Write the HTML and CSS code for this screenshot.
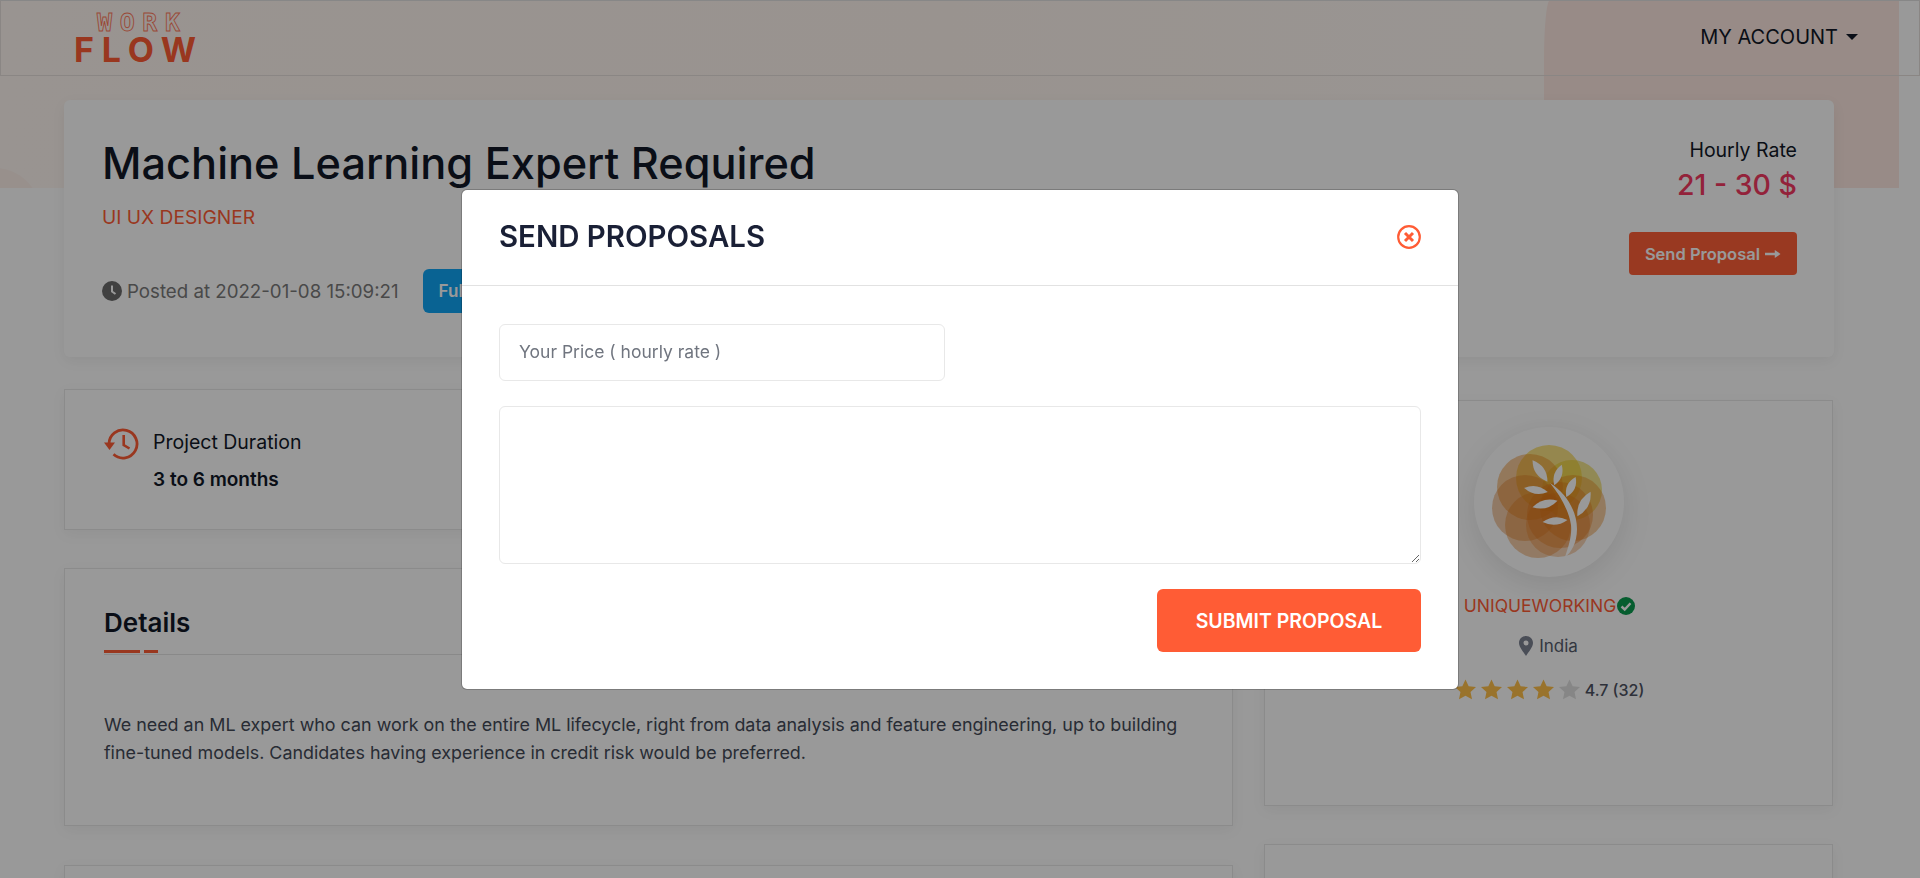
FILE: index.html
```html
<!DOCTYPE html>
<html lang="en">
<head>
    <meta charset="UTF-8">
    <title>Machine Learning Expert Required</title>
    <link rel="stylesheet" href="styles.css">
</head>
<body>

<div class="banner">
    <div class="banner-shape"></div>
    <div class="banner-dot"></div>
</div>

<header class="topbar">
    <a class="logo" href="#">
        <svg viewBox="0 0 124 54">
            <text class="logo-work" x="22" y="20" textLength="83">WORK</text>
            <text class="logo-flow" x="-1" y="51" textLength="122">FLOW</text>
        </svg>
    </a>
    <a class="account" href="#">MY ACCOUNT <span class="caret"></span></a>
</header>

<main class="page">
    <!-- job title -->
    <section class="job-card">
        <div>
            <h1>Machine Learning Expert Required</h1>
            <p class="job-role">UI UX DESIGNER</p>
            <div class="job-meta">
                <span class="posted">
                    <svg class="icon-clock" viewBox="0 0 20 20"><circle cx="10" cy="10" r="10" fill="#6b6b6b"/><path d="M10 4.500V10.500L13.500 13" fill="none" stroke="#fff" stroke-width="2"/></svg>
                    Posted at 2022-01-08 15:09:21
                </span>
                <span class="badge">Full Time</span>
            </div>
        </div>
        <div class="job-rate">
            <p class="rate-label">Hourly Rate</p>
            <p class="rate-value">21 - 30 $</p>
            <a class="btn-send" href="#">Send Proposal
                <svg class="icon-arrow" viewBox="0 0 18 10"><path d="M0 3.600H11V0.600L17.500 5L11 9.400V6.400H0Z" fill="#fff"/></svg>
            </a>
        </div>
    </section>

    <div class="columns">
        <div class="col-left">
            <section class="card duration">
                <svg class="icon-history" viewBox="0 0 36 32">
                    <path d="M5 16A14 14 0 1 1 9.500 26.300" fill="none" stroke="#ff5c35" stroke-width="2.800"/>
                    <path d="M0 14.500H11L5.500 22Z" fill="#ff5c35"/>
                    <path d="M19.700 7V17L25.500 20.500" fill="none" stroke="#ff5c35" stroke-width="2.600"/>
                </svg>
                <div>
                    <p class="duration-label">Project Duration</p>
                    <p class="duration-value">3 to 6 months</p>
                </div>
            </section>

            <section class="card details">
                <h2>Details</h2>
                <div class="rule"><span></span><span class="short"></span></div>
                <p class="details-text">We need an ML expert who can work on the entire ML lifecycle, right from data analysis and feature engineering, up to building fine-tuned models. Candidates having experience in credit risk would be preferred.</p>
            </section>

            <section class="card stub"></section>
        </div>

        <aside class="col-right">
            <section class="card company">
                <div class="avatar">
                    <svg viewBox="0 0 150 150">
                        <g>
                            <circle cx="75" cy="51" r="33" fill="#f2c81e" opacity=".55"/>
                            <circle cx="98" cy="63" r="30" fill="#e6c91e" opacity=".5"/>
                            <circle cx="56" cy="60" r="33" fill="#e8851a" opacity=".45"/>
                            <circle cx="99" cy="81" r="33" fill="#e8851a" opacity=".42"/>
                            <circle cx="51" cy="81" r="33" fill="#d9741c" opacity=".38"/>
                            <circle cx="86" cy="88" r="33" fill="#e27316" opacity=".38"/>
                            <circle cx="64" cy="98" r="33" fill="#e07a18" opacity=".38"/>
                            <circle cx="84" cy="98" r="32" fill="#e27316" opacity=".32"/>
                        </g>
                        <path d="M76 56C92 66 103 84 103 102C103 116 97 126 91 130C95 118 98 108 97 98C95 84 86 68 76 56Z" fill="#fff"/>
                        <g fill="#fff">
                            <path d="M-13 0Q0 -9 13 0Q0 9 -13 0Z" transform="translate(66 44) rotate(55)"/>
                            <path d="M-11 0Q0 -7.500 11 0Q0 7.500 -11 0Z" transform="translate(84 48) rotate(-70)"/>
                            <path d="M-11 0Q0 -8 11 0Q0 8 -11 0Z" transform="translate(97 60) rotate(-65)"/>
                            <path d="M-14 0Q0 -9 14 0Q0 9 -14 0Z" transform="translate(110 77) rotate(-62)"/>
                            <path d="M-12 0Q0 -7.500 12 0Q0 7.500 -12 0Z" transform="translate(62 63) rotate(10)"/>
                            <path d="M-13 0Q0 -8 13 0Q0 8 -13 0Z" transform="translate(71 77) rotate(-15)"/>
                            <path d="M-12.500 0Q0 -7.500 12.500 0Q0 7.500 -12.500 0Z" transform="translate(81 94) rotate(-5)"/>
                        </g>
                    </svg>
                </div>
                <p class="company-name">UNIQUEWORKING<svg class="icon-check" viewBox="0 0 18 18"><circle cx="9" cy="9" r="9" fill="#0a9b4f"/><path d="M4.500 9.500L7.700 12.500L13.500 6.300" fill="none" stroke="#fff" stroke-width="2.400"/></svg></p>
                <p class="company-loc">
                    <svg class="icon-pin" viewBox="0 0 14 20"><path fill-rule="evenodd" d="M7 0C3 0 0 3 0 7C0 11 4.500 16 7 20C9.500 16 14 11 14 7C14 3 11 0 7 0ZM7 4.500A2.500 2.500 0 1 1 7 9.500A2.500 2.500 0 0 1 7 4.500Z" fill="#7c8292"/></svg>
                    India
                </p>
                <div class="company-rating">
                    <svg class="star" viewBox="0 0 20 20"><path d="M10 0.500L13 6.900L20 7.700L14.800 12.400L16.200 19.400L10 15.900L3.800 19.400L5.200 12.400L0 7.700L7 6.900Z" fill="#ffc04a"/></svg>
                    <svg class="star" viewBox="0 0 20 20"><path d="M10 0.500L13 6.900L20 7.700L14.800 12.400L16.200 19.400L10 15.900L3.800 19.400L5.200 12.400L0 7.700L7 6.900Z" fill="#ffc04a"/></svg>
                    <svg class="star" viewBox="0 0 20 20"><path d="M10 0.500L13 6.900L20 7.700L14.800 12.400L16.200 19.400L10 15.900L3.800 19.400L5.200 12.400L0 7.700L7 6.900Z" fill="#ffc04a"/></svg>
                    <svg class="star" viewBox="0 0 20 20"><path d="M10 0.500L13 6.900L20 7.700L14.800 12.400L16.200 19.400L10 15.900L3.800 19.400L5.200 12.400L0 7.700L7 6.900Z" fill="#ffc04a"/></svg>
                    <svg class="star" viewBox="0 0 20 20"><path d="M10 0.500L13 6.900L20 7.700L14.800 12.400L16.200 19.400L10 15.900L3.800 19.400L5.200 12.400L0 7.700L7 6.900Z" fill="#e0e0e0"/></svg>
                    <span class="rating-text">4.7 (32)</span>
                </div>
            </section>
            <section class="card stub"></section>
        </aside>
    </div>
</main>

<!-- proposal modal, open -->
<div class="backdrop"></div>
<div class="modal-wrap">
    <div class="modal">
        <div class="modal-head">
            <h3>SEND PROPOSALS</h3>
            <svg class="icon-close" viewBox="0 0 24 24"><circle cx="12" cy="12" r="10.800" fill="none" stroke="#ff5c35" stroke-width="2.200"/><path d="M8 8L16 16M16 8L8 16" stroke="#ff5c35" stroke-width="3"/></svg>
        </div>
        <form class="modal-body">
            <input class="field field-price" type="text" placeholder="Your Price ( hourly rate )">
            <textarea class="field field-text"></textarea>
            <div class="modal-actions">
                <button class="btn-submit" type="button">SUBMIT PROPOSAL</button>
            </div>
        </form>
    </div>
</div>

</body>
</html>
```

FILE: styles.css
```css
* {
    box-sizing: border-box;
}
html, body {
    height: 100%;
    overflow: hidden;
}
body {
    margin: 0;
    font-family: "Inter", "Liberation Sans", sans-serif;
    color: #111827;
    background-color: #fff;
    position: relative;
}
p, h1, h2, h3 {
    margin: 0;
}
a {
    color: inherit;
    text-decoration: none;
}

/* banner behind the header */
.banner {
    position: absolute;
    top: 0;
    left: 0;
    width: 1899px;
    height: 188px;
    overflow: hidden;
    background: linear-gradient(90deg, #fff7f2 0%, #fff6ef 50%, #fff8f4 80%);
}
.banner-shape {
    position: absolute;
    top: 0;
    right: 0;
    width: 355px;
    height: 188px;
    background-color: #fde8e1;
    border-radius: 6px 0 0 0 / 60px 0 0 0;
}
.banner-dot {
    position: absolute;
    left: -50px;
    top: 168px;
    width: 90px;
    height: 90px;
    border-radius: 50%;
    background-color: #fdf0ea;
}

.topbar {
    position: relative;
    height: 76px;
    border: 1px solid #e6e0dc;
    border-top-color: #e2e2e2;
    display: flex;
    align-items: center;
    justify-content: space-between;
    padding: 0 61px 0 74px;
}
.logo {
    display: block;
    width: 124px;
    height: 54px;
    margin-top: -1px;
}
.logo svg {
    display: block;
    width: 124px;
    height: 54px;
    overflow: visible;
}
.logo-work {
    font-family: "DejaVu Sans Mono", monospace;
    font-size: 25px;
    font-weight: 700;
    fill: none;
    stroke: #ff7a5c;
    stroke-width: 0.9;
}
.logo-flow {
    font-family: "Inter", sans-serif;
    font-size: 34px;
    font-weight: 700;
    fill: #ff5c35;
}
.account {
    font-size: 20px;
    display: flex;
    align-items: center;
    gap: 8px;
    margin-top: -2px;
    color: #111827;
}
.caret {
    border-top: 6px solid #111827;
    border-left: 6px solid transparent;
    border-right: 6px solid transparent;
}

.page {
    position: relative;
    padding: 24px 86px 0 64px;
}

.job-card {
    height: 257px;
    background-color: #fff;
    border-radius: 6px;
    box-shadow: 0 4px 14px rgba(0, 0, 0, 0.06);
    padding: 37px 37px 0 38px;
    display: flex;
    justify-content: space-between;
}
h1 {
    font-size: 43.300px;
    font-weight: 500;
    line-height: 52px;
    color: #111827;
}
.job-role {
    margin-top: 16px;
    font-size: 19.200px;
    line-height: 24px;
    color: #ff5c35;
}
.job-meta {
    margin-top: 40px;
    display: flex;
    align-items: center;
    gap: 24px;
}
.posted {
    display: flex;
    align-items: center;
    gap: 5px;
    font-size: 18.700px;
    color: #7a7a7a;
}
.icon-clock {
    width: 20px;
    height: 20px;
}
.badge {
    height: 44px;
    line-height: 44px;
    padding: 0 16px;
    border-radius: 6px;
    background-color: #10a6f5;
    color: #fff;
    font-weight: 600;
    font-size: 17px;
}

.job-rate {
    text-align: right;
}
.rate-label {
    margin-top: 1px;
    font-size: 19.500px;
    line-height: 24px;
    color: #111827;
}
.rate-value {
    margin-top: 5px;
    font-size: 28.500px;
    line-height: 36px;
    font-weight: 500;
    color: #f53a62;
}
.btn-send {
    display: inline-flex;
    align-items: center;
    gap: 5px;
    margin-top: 29px;
    height: 43px;
    padding: 0 16px;
    background-color: #ff5f38;
    border-radius: 4px;
    color: #fff;
    font-size: 16.500px;
    font-weight: 600;
}
.icon-arrow {
    width: 16px;
    height: 10px;
}

.columns {
    display: flex;
    gap: 31px;
    margin-top: 32px;
    align-items: flex-start;
}
.col-left {
    width: 1169px;
    flex: none;
}
.col-right {
    width: 569px;
    flex: none;
    margin-top: 11px;
}
.card {
    background-color: #fff;
    border: 1px solid #e8e8e8;
    box-shadow: 0 4px 14px rgba(0, 0, 0, 0.05);
}
.stub {
    height: 120px;
}

.duration {
    height: 141px;
    margin-bottom: 38px;
    display: flex;
    align-items: flex-start;
    gap: 13px;
    padding: 38px 39px 0;
}
.icon-history {
    width: 36px;
    height: 32px;
}
.duration-label {
    font-size: 19.500px;
    line-height: 28px;
    color: #111827;
}
.duration-value {
    margin-top: 10px;
    font-size: 19px;
    line-height: 28px;
    font-weight: 600;
    color: #111827;
}

.details {
    height: 258px;
    margin-bottom: 39px;
    padding: 36px 39px 0;
}
h2 {
    font-size: 26px;
    line-height: 36px;
    font-weight: 600;
    color: #111827;
}
.rule {
    margin-top: 9px;
    height: 4px;
    border-bottom: 1px solid #e4e4e4;
    display: flex;
    gap: 4px;
    box-sizing: content-box;
}
.rule span {
    width: 36px;
    height: 3px;
    background-color: #ff5c35;
}
.rule .short {
    width: 14px;
}
.details-text {
    margin-top: 56px;
    font-size: 17.900px;
    line-height: 28px;
    color: #444a58;
}

.company {
    height: 406px;
    margin-bottom: 38px;
    padding-top: 26px;
    display: flex;
    flex-direction: column;
    align-items: center;
}
.avatar {
    width: 150px;
    height: 150px;
    border-radius: 50%;
    background-color: #fff;
    box-shadow: 0 8px 30px rgba(0, 0, 0, 0.1);
}
.avatar svg {
    display: block;
    width: 150px;
    height: 150px;
}
.company-name {
    margin-top: 17px;
    margin-left: 2px;
    display: flex;
    align-items: center;
    gap: 1px;
    font-size: 17.500px;
    line-height: 24px;
    color: #ff5c35;
}
.icon-check {
    width: 18px;
    height: 18px;
}
.company-loc {
    margin-top: 16px;
    display: flex;
    align-items: center;
    gap: 6px;
    font-size: 17px;
    line-height: 24px;
    color: #565c6c;
}
.icon-pin {
    width: 14px;
    height: 20px;
}
.company-rating {
    margin-top: 21px;
    margin-left: 2px;
    display: flex;
    align-items: center;
    gap: 5px;
}
.star {
    width: 21px;
    height: 21px;
}
.rating-text {
    font-size: 16px;
    font-weight: 500;
    color: #4d5262;
}

/* modal */
.backdrop {
    position: fixed;
    inset: 0;
    background-color: rgba(0, 0, 0, 0.4);
}
.modal-wrap {
    position: fixed;
    inset: 0;
    display: flex;
    justify-content: center;
    align-items: flex-start;
    padding-top: 189px;
}
.modal {
    width: 998px;
    height: 501px;
    background-color: #fff;
    border: 1px solid rgba(0, 0, 0, 0.2);
    background-clip: padding-box;
    border-radius: 6px;
}
.modal-head {
    height: 96px;
    border-bottom: 1px solid #e2e2e2;
    display: flex;
    align-items: center;
    justify-content: space-between;
    padding: 0 37px 2px;
}
h3 {
    font-size: 29.400px;
    font-weight: 600;
    color: #1a2036;
}
.icon-close {
    width: 24px;
    height: 24px;
}
.modal-body {
    padding: 38px 37px 0;
    display: flex;
    flex-direction: column;
}
.field {
    display: block;
    border: 1px solid #e8e8e8;
    border-radius: 6px;
    background-color: #fff;
    font-family: inherit;
    font-size: 17.500px;
    color: #1a2036;
}
.field::placeholder {
    color: #70757f;
}
.field-price {
    width: 446px;
    height: 57px;
    padding: 0 19px 2px;
}
.field-text {
    width: 922px;
    height: 158px;
    margin-top: 25px;
}
.modal-actions {
    margin-top: 25px;
    display: flex;
    justify-content: flex-end;
}
.btn-submit {
    width: 264px;
    height: 63px;
    border: none;
    border-radius: 6px;
    background-color: #ff5c35;
    color: #fff;
    font-family: inherit;
    font-size: 19.500px;
    font-weight: 600;
}
```
